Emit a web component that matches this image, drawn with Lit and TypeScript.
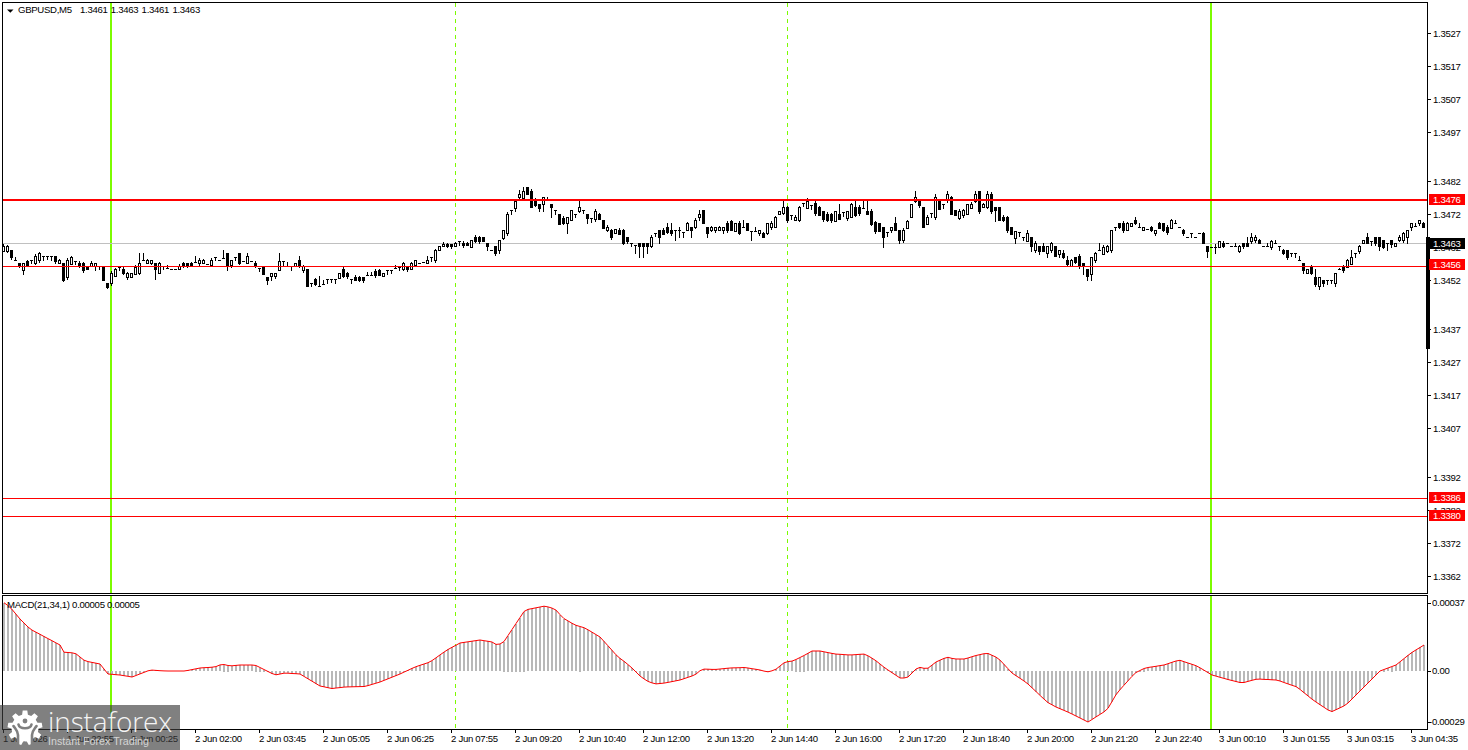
import { LitElement, html, css, svg } from "lit";
import { customElement } from "lit/decorators.js";

const RAW = `246,5 246,5 250,-7 260,0,257 263,-3 263,7,263,274 261,-4 260,0 256,7 253,7 256,1 256,1 256,1 256,-5 260,3 263,-17 260,17 257,7 261,1 263,-3 263,-7 266,-3 263,3 263,3,263,270 266,0 267,-13 283,-4 273,10 269,7 267,0 269,-4 273,4 273,4 267,7 263,10,253 260,1,253 260,3 260,3 263,-6,263,279 263,10 266,0 268,0,265 269,0,269,269 269,0,269,269 266,3 263,-3 263,-2 263,-2 262,1,256 260,3 260,3 264,0,264,264 260,5 257,0 260,0,260,260 258,1,250 253,-12,253,270 260,5 257,1 253,-10 261,0,261,261 256,7,253 261,0,261,261 263,-3 268,0 267,-7 277,-3,277,284 273,3,273,280 273,3 261,9,253 261,1 266,0,262 266,1 263,3 260,-6,256 266,4 269,-17 283,1 279,-5 286,0,276 284,0,280 279,1 279,1 279,1 273,5 269,-7 273,-3 279,1 277,-3 277,-3 277,-3 275,1,272 275,-1,272 271,-4 270,-5 273,3 270,1 270,1 268,1,265 267,1 263,6 266,-3 263,6 260,5 263,0,263,263 262,0,262,262 260,3,256 257,1 250,10 246,4 244,2 244,-2 244,-2 243,3 241,1 243,-2 243,-2 240,7 237,-4 237,-4 237,-4 243,-3,243,250 250,0,250,250 246,-7 240,10,240,253 230,8 214,19 210,1 201,7,201,211 194,3,190 191,7,187 187,-7 191,-16 200,-5,198 204,-4,204,211 197,7,197,211 200,1,197 204,-3,204,217 210,1 214,-10 218,-5 217,6,217,233 210,10 214,1 207,4,201 210,1 214,-4,214,223 218,1 211,8 214,-5 220,-8 227,3 230,-7 229,4 230,-4 230,-13 237,-4 243,0 245,0,245,253 243,-3,243,257 243,-3,243,257 243,-3,243,253 237,9 233,1 230,-7,230,243 230,-4 227,-5,223 230,-3,223 230,0,230,240 230,1,227,237 232,0,232,237 223,7 227,-3,227,237 220,7 214,3,210,220 210,-13 227,-6,227,237 227,3 227,3 227,3 227,3,227,233 223,-7 221,-9 223,8 223,-10 227,1,220 223,-7 231,0,231,240 231,1,227 230,3 233,-4 223,10 223,4 217,10 211,3 207,6,201 207,-13 215,1 217,3 207,13 203,1 201,7,198 205,0 203,-10,200 207,-8 211,-8,211,221 214,-6 214,-6 211,10 214,-5,204 212,1 211,7 204,13 207,-8,201 207,-6 208,1,201 211,-3,201 211,-13 222,-9 223,-8 227,-10,227,247 232,1 227,3 223,-7,217 230,-10,230,243 230,10 221,7 204,13 197,4,191 201,-4 207,-20 217,7 213,1 197,20,194 201,-8 204,1 194,6,191 197,-17 210,-5 211,7 210,5 204,10 204,4 194,7,191 191,-20 204,3 194,13,191 194,-17 207,-3,207,221 207,-13 217,-3 217,-13 227,-7 231,7,231,243 232,1 237,1 233,8,230 237,-9,237,251 243,7 246,-5,246,254 246,-5,243 246,7,246,257 243,7 246,-10 250,4,250,257 253,-4,250 260,-4,256,265 260,6 257,-5 256,-10 263,-3,263,274 269,-7,269,280 257,17,257,280 253,7 250,1,243 247,7 246,5 230,20 227,1 223,-4 223,-7 223,7 223,3 220,-3,217 227,1,223 227,3 229,1,229,229 227,-3 230,3 223,-5 223,-7 227,-5 220,8 223,0,220 227,0,227,227 230,-3 237,0,237,237 233,0,233,237 237,0,237,237 233,0,233,233 233,-10 246,-5,246,257 247,0,247,247 247,-1,244,253 241,6 243,-3 243,0,243,243 246,0,246,246 246,0,243 246,5 243,-3 243,-3,237 237,4,233,243 237,3 240,-3 246,0,246,246 246,0,243 241,6 243,0,240 246,0,246,250 250,-3 250,-7 253,1 253,1 260,0,256 263,-7,263,273 269,4 267,-6 277,-7,269 277,9,277,289 280,-3,280,286 280,1 280,1 273,10,273,286 269,1,268 267,-3 260,7 257,7,250 253,1 246,5 240,3 237,-6,233 241,1 237,-6 237,-9,237,250 240,-7 243,0,243,250 240,-4,240,247 243,3 237,3 233,7 230,7,230,243 223,4,223,230 226,1,223 220,3 223,-4`;

const MACD_PTS: [number, number][] = [[3,602],[10,607],[20,619],[30,629],[45,637],[60,645],[62,652],[75,653],[85,661],[100,664],[108,674],[120,675],[132,677],[145,672],[150,670],[165,671],[185,671],[200,668],[215,667],[222,664],[230,666],[240,665],[255,665],[265,670],[275,675],[285,673],[300,674],[310,680],[320,686],[332,688.5],[345,687],[365,686.5],[380,682],[400,674],[415,667],[430,662],[447,650],[460,643],[480,640],[492,642],[497,645],[503,643],[515,625],[525,610],[535,608],[545,606],[555,609],[563,618],[575,625],[585,628],[595,634],[600,637],[610,648],[618,657],[625,662],[632,668],[640,676],[647,681],[655,684],[665,683],[680,680],[695,675],[702,669],[715,669.5],[730,668],[745,667.5],[760,670],[767,672],[775,670],[785,662],[793,661],[805,655],[812,651],[820,651],[835,654],[850,655],[865,654],[875,660],[885,668],[900,678],[907,678],[918,667],[927,669],[936,662],[947,657],[954,659],[965,659],[974,656],[987,653],[998,658],[1012,673],[1027,683],[1047,702],[1056,707],[1070,713],[1088,722],[1107,710],[1117,693],[1135,673],[1145,668],[1164,665],[1179,660],[1197,666],[1212,675],[1226,679],[1242,683],[1257,679],[1277,680],[1297,687],[1313,700],[1331,712],[1346,705],[1364,687],[1380,671],[1396,665],[1411,653],[1424,645]];

function macdAt(x: number): number {
  for (let k = 1; k < MACD_PTS.length; k++) {
    const [x0, y0] = MACD_PTS[k - 1];
    const [x1, y1] = MACD_PTS[k];
    if (x <= x1) return y0 + ((y1 - y0) * (x - x0)) / (x1 - x0);
  }
  return MACD_PTS[MACD_PTS.length - 1][1];
}

function buildCandles() {
  let wick = "", solid = "", hollow = "";
  RAW.trim().split(/\s+/).forEach((tok, i) => {
    const p = tok.split(",").map(Number);
    const x = 3 + 4 * i;
    const t = p[0], h = p[1];
    const hash = (i * 7919 + 13) % 11;
    const doji = Math.abs(h) <= 1;
    if (doji) {
      const hi = p.length > 2 ? p[2] : t;
      const lo = p.length > 3 ? p[3] : p.length > 2 ? t : t + 3 + (hash % 2);
      wick += `M${x + 0.5} ${hi}V${lo + 1}M${x - 1} ${t + 0.5}H${x + 2}`;
      return;
    }
    const ah = Math.abs(h);
    const hi = p.length > 2 ? p[2] : t - (hash % 3);
    const lo = p.length > 3 ? p[3] : t + ah + (hash % 4 === 0 ? 2 : hash % 4 === 1 ? 1 : 0);
    wick += `M${x + 0.5} ${hi}V${lo + 1}`;
    if (h < 0) solid += `M${x - 1} ${t}h3v${ah + 1}h-3z`;
    else hollow += `M${x - 0.5} ${t + 0.5}h2v${ah}h-2z`;
  });
  return { wick, solid, hollow };
}

const CANDLES = buildCandles();
const BARS = Array.from({ length: 356 }, (_, i) => 3 + 4 * i);

const AXIS: [string, number][] = [["1.3527",33],["1.3517",66],["1.3507",99],["1.3497",132],["1.3482",181],["1.3472",214],["1.3462",247],["1.3452",280],["1.3437",329],["1.3427",362],["1.3417",395],["1.3407",428],["1.3392",477],["1.3382",510],["1.3372",543],["1.3362",576]];
const REDTAGS: [string, number][] = [["1.3476",200],["1.3456",265],["1.3386",498],["1.3380",516]];
const TIMES = ["1 Jun 2026","1 Jun 22:55","2 Jun 00:25","2 Jun 02:00","2 Jun 03:45","2 Jun 05:05","2 Jun 06:25","2 Jun 07:55","2 Jun 09:20","2 Jun 10:40","2 Jun 12:00","2 Jun 13:20","2 Jun 14:40","2 Jun 16:00","2 Jun 17:20","2 Jun 18:40","2 Jun 20:00","2 Jun 21:20","2 Jun 22:40","3 Jun 00:10","3 Jun 01:55","3 Jun 03:15","3 Jun 04:35"];

function gearPoints(): string {
  const pts: string[] = [];
  const cx = 18, cy = 18, n = 9;
  for (let i = 0; i < n; i++) {
    const a = (i / n) * Math.PI * 2 - Math.PI / 2;
    const w = (Math.PI / n) * 0.5;
    [[13.5, -w * 1.25], [17.5, -w * 0.75], [17.5, w * 0.75], [13.5, w * 1.25]].forEach(([r, d]) => {
      pts.push(`${(cx + r * Math.cos(a + d)).toFixed(1)},${(cy + r * Math.sin(a + d)).toFixed(1)}`);
    });
  }
  return pts.join(" ");
}

const verticals = (y0: number, y1: number) => svg`
  <path class="sep" d="M455.5 ${y0}V${y1}M787.5 ${y0}V${y1}"></path>
  <path class="period" d="M111 ${y0}V${y1}M1211 ${y0}V${y1}"></path>`;

@customElement("app-root")
export class AppRoot extends LitElement {
  static styles = css`
    :host { display: block; position: relative; width: 1468px; height: 750px; background: #fff; overflow: hidden; }
    .stack { display: flex; flex-direction: column; }
    svg.pane { display: block; width: 1468px; flex: none; }
    .main { height: 594px; }
    .osc { height: 136px; }
    .time { height: 20px; }
    text { font-family: "Liberation Sans", Arial, sans-serif; font-size: 9.6px; letter-spacing: -0.3px; fill: #000; }
    .frame { fill: none; stroke: #000; stroke-width: 1; shape-rendering: crispEdges; }
    .tick { stroke: #000; stroke-width: 1; shape-rendering: crispEdges; fill: none; }
    .sep { stroke: #7cfc00; stroke-width: 1; stroke-dasharray: 4 4; fill: none; shape-rendering: crispEdges; }
    .period { stroke: #7cfc00; stroke-width: 2; fill: none; shape-rendering: crispEdges; }
    .bid { stroke: #c0c0c0; stroke-width: 1; shape-rendering: crispEdges; }
    .level { stroke: #f00; stroke-width: 1; shape-rendering: crispEdges; }
    .level.wide { stroke-width: 2; }
    .wick { stroke: #000; stroke-width: 1; fill: none; shape-rendering: crispEdges; }
    .solid { fill: #000; shape-rendering: crispEdges; }
    .hollow { fill: #fff; stroke: #000; stroke-width: 1; shape-rendering: crispEdges; }
    .red-tag { fill: #f00; shape-rendering: crispEdges; }
    .black-tag { fill: #000; shape-rendering: crispEdges; }
    text.on-dark { fill: #fff; }
    .hbar { fill: #b8b8b8; shape-rendering: crispEdges; }
    .signal { fill: none; stroke: #f00; stroke-width: 1; }
    .logo {
      position: absolute; left: 0; bottom: 0; width: 180px; height: 45px;
      background: rgba(60, 60, 60, 0.65); display: flex; gap: 5px; padding: 5px 0 0 7px; box-sizing: border-box;
    }
    .gear { width: 36px; height: 36px; flex: none; }
    .gear polygon { fill: #fff; }
    .gear .cut { fill: none; stroke: #808080; stroke-width: 2.6; stroke-linecap: round; }
    .gear .dot { fill: #808080; }
    .brand { display: flex; flex-direction: column; color: #f4f4f4; }
    .name { font: 300 28px/28px "Open Sans", sans-serif; letter-spacing: -0.1px; margin-top: -3px; height: 27px; }
    .tag { font: 400 10.7px/13px "Liberation Sans", Arial, sans-serif; color: #d4d4d4; margin-top: 1px; }
  `;

  render() {
    const values = ["1.3461", "1.3463", "1.3461", "1.3463"];
    const line = BARS.map((x) => `${x + 1},${macdAt(x + 1).toFixed(1)}`).join(" ");
    return html`
      <div class="stack">
        <svg class="pane main" viewBox="0 0 1468 594">
          ${verticals(3, 593)}
          <path class="bid" d="M3 243.5H1427"></path>
          <path class="wick" d=${CANDLES.wick}></path>
          <path class="solid" d=${CANDLES.solid}></path>
          <path class="hollow" d=${CANDLES.hollow}></path>
          <path class="level wide" d="M3 200H1427"></path>
          <path class="level" d="M3 266.5H1427M3 498.5H1427M3 516.5H1427"></path>
          <path class="frame" d="M2.5 2.5H1427.5V593.5H2.5Z"></path>
          <path d="M7 9.5h6.5l-3.2 3.2z"></path>
          <text x="18" y="13">GBPUSD,M5</text>
          ${values.map((v, i) => svg`<text x=${80 + i * 30.8} y="13">${v}</text>`)}
          ${AXIS.map(([t, y]) => svg`
            <path class="tick" d="M1428 ${y + 0.5}H1431"></path>
            <text x="1433" y=${y + 3.5}>${t}</text>`)}
          <rect class="black-tag" x="1426" y="237" width="4" height="112"></rect>
          <rect class="black-tag" x="1429" y="238" width="36" height="11"></rect>
          <text class="on-dark" x="1433" y="246.5">1.3463</text>
          ${REDTAGS.map(([t, y]) => svg`
            <rect class="red-tag" x="1429" y=${y - 6} width="36" height="11"></rect>
            <text class="on-dark" x="1433" y=${y + 3}>${t}</text>`)}
        </svg>
        <svg class="pane osc" viewBox="0 594 1468 136">
          ${verticals(596, 729)}
          ${BARS.map((x) => {
            const y = macdAt(x + 1);
            const top = Math.min(y, 671);
            return svg`<rect class="hbar" x=${x} y=${top.toFixed(0)} width="2" height=${Math.abs(y - 671).toFixed(0)}></rect>`;
          })}
          <polyline class="signal" points=${line}></polyline>
          <path class="frame" d="M2.5 595.5H1427.5V729.5H2.5Z"></path>
          <text x="7" y="608">MACD(21,34,1) 0.00005 0.00005</text>
          <path class="tick" d="M1428 603.5H1431M1428 671.5H1431M1428 722.5H1431"></path>
          <text x="1432" y="606">0.00037</text>
          <text x="1432" y="674">0.00</text>
          <text x="1429" y="725">-0.00029</text>
        </svg>
        <svg class="pane time" viewBox="0 730 1468 20">
          ${TIMES.map((t, i) => {
            const x = i === 0 ? 3 : 3 + 64 * i;
            return svg`
              <path class="tick" d="M${x + 0.5} 730V733"></path>
              <text x=${x} y="742">${t}</text>`;
          })}
        </svg>
      </div>
      <div class="logo">
        <svg class="gear" viewBox="0 0 36 36">
          <polygon points=${gearPoints()}></polygon>
          <path class="cut" d="M11 36V25C11 21 8.5 19 6.5 16"></path>
          <path class="cut" d="M25 36V25C25 21 27.5 19 29.5 16"></path>
          <path class="cut" d="M11.5 14.5C12.5 19.5 23.5 19.5 24.5 14.5"></path>
          <circle class="dot" cx="18" cy="11" r="2.4"></circle>
          <path class="cut" d="M18 36V34"></path>
        </svg>
        <div class="brand">
          <div class="name">instaforex</div>
          <div class="tag">Instant Forex Trading</div>
        </div>
      </div>
    `;
  }
}
